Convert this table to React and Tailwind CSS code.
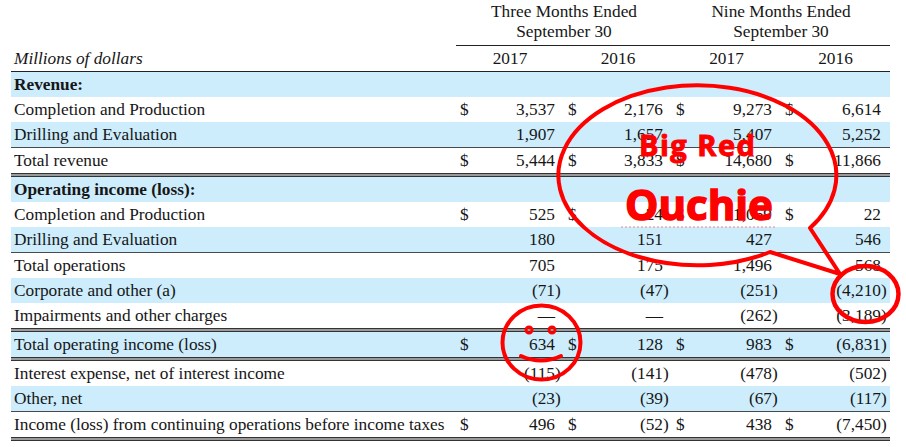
const rows = [
  { label: 'Revenue:', bold: true, blue: true },
  { label: 'Completion and Production', usd: true, vals: ['3,537', '2,176', '9,273', '6,614'] },
  { label: 'Drilling and Evaluation', blue: true, vals: ['1,907', '1,657', '5,407', '5,252'], sep: 'single' },
  { label: 'Total revenue', usd: true, vals: ['5,444', '3,833', '14,680', '11,866'], sep: 'double' },
  { label: 'Operating income (loss):', bold: true, blue: true },
  { label: 'Completion and Production', usd: true, vals: ['525', '24', '1,069', '22'] },
  { label: 'Drilling and Evaluation', blue: true, vals: ['180', '151', '427', '546'], sep: 'single' },
  { label: 'Total operations', vals: ['705', '175', '1,496', '568'] },
  { label: 'Corporate and other (a)', blue: true, vals: ['(71)', '(47)', '(251)', '(4,210)'] },
  { label: 'Impairments and other charges', vals: ['—', '—', '(262)', '(3,189)'], sep: 'double' },
  { label: 'Total operating income (loss)', blue: true, usd: true, vals: ['634', '128', '983', '(6,831)'], sep: 'double' },
  { label: 'Interest expense, net of interest income', vals: ['(115)', '(141)', '(478)', '(502)'] },
  { label: 'Other, net', blue: true, vals: ['(23)', '(39)', '(67)', '(117)'], sep: 'single' },
  { label: 'Income (loss) from continuing operations before income taxes', usd: true, vals: ['496', '(52)', '438', '(7,450)'], sep: 'double' },
];

const cols = 'grid grid-cols-[445px_108px_108px_109px_109px]';

function Cell({ value, usd }) {
  const paren = value && value.endsWith(')');
  const num = paren ? value.slice(0, -1) : value;
  return (
    <div className="flex items-center pl-[4px]">
      <span className="w-[10px]">{usd ? '$' : ''}</span>
      <span className="flex-1 text-right">{num}</span>
      <span className="w-[9px]">{paren ? ')' : ''}</span>
    </div>
  );
}

function Row({ row }) {
  return (
    <>
      <div className={`${cols} h-[25px] leading-[25px] ${row.blue ? 'bg-[#cdedfc]' : 'bg-white'}`}>
        <div className={`pl-[3px] whitespace-nowrap ${row.bold ? 'font-bold' : ''}`}>{row.label}</div>
        {row.vals
          ? row.vals.map((v, i) => <Cell key={i} value={v} usd={row.usd} />)
          : [0, 1, 2, 3].map((i) => <div key={i} />)}
      </div>
      {row.sep === 'single' && <div className="h-[1px] bg-[#4a4a4a]" />}
      {row.sep === 'double' && <div className="h-[4px] border-y border-[#333] bg-[#9a9a9a]" />}
    </>
  );
}

export default function App() {
  return (
    <div className="relative w-[906px] h-[447px] bg-white overflow-hidden font-['Liberation_Serif',serif] text-[17.3px] text-[#161616]">
      <div className="ml-[11px] w-[879px]">
        {/* column group headings */}
        <div className="grid grid-cols-[445px_216px_218px] h-[46px]">
          <div />
          <div className="col-span-2 grid grid-cols-[216px_218px] border-b border-[#222] pt-[2px] leading-[20px] text-center">
            <div>
              <div>Three Months Ended</div>
              <div>September 30</div>
            </div>
            <div>
              <div>Nine Months Ended</div>
              <div>September 30</div>
            </div>
          </div>
        </div>
        <div className={`${cols} h-[26px] leading-[25px] border-b border-[#222]`}>
          <div className="pl-[3px] italic">Millions of dollars</div>
          <div className="text-center">2017</div>
          <div className="text-center">2016</div>
          <div className="text-center">2017</div>
          <div className="text-center">2016</div>
        </div>
        {rows.map((row, i) => (
          <Row key={i} row={row} />
        ))}
      </div>

      {/* red scribbles on top */}
      <svg className="absolute top-0 left-0 pointer-events-none" width="906" height="447" viewBox="0 0 906 447">
        <line x1="621" y1="227" x2="775" y2="227" stroke="#f08a8a" strokeWidth="1" strokeDasharray="2 2" />
        <path d="M810 228 A139 90 0 1 0 770 252 L840 274 Z" fill="none" stroke="#f00" strokeWidth="4" strokeLinejoin="round" />
        <ellipse cx="865.5" cy="294" rx="33" ry="28" fill="none" stroke="#f00" strokeWidth="4.5" />
        <ellipse cx="541.5" cy="342.5" rx="39" ry="37" fill="none" stroke="#f00" strokeWidth="4" />
        <circle cx="529" cy="330" r="3" fill="none" stroke="#f00" strokeWidth="3" />
        <circle cx="552" cy="330" r="3" fill="none" stroke="#f00" strokeWidth="3" />
        <path d="M521 356 Q541 365 561 356" fill="none" stroke="#f00" strokeWidth="4" strokeLinecap="round" />
      </svg>
      <div className="absolute left-[639px] top-[130px] font-['Open_Sans',sans-serif] font-bold text-[29px] leading-none tracking-[1.5px] [-webkit-text-stroke:1px_#f00] text-[#f00] whitespace-nowrap">
        Big Red
      </div>
      <div className="absolute left-[625px] top-[183px] font-['Open_Sans',sans-serif] font-bold text-[42px] leading-none [-webkit-text-stroke:1.5px_#f00] text-[#f00] whitespace-nowrap">
        Ouchie
      </div>
    </div>
  );
}
